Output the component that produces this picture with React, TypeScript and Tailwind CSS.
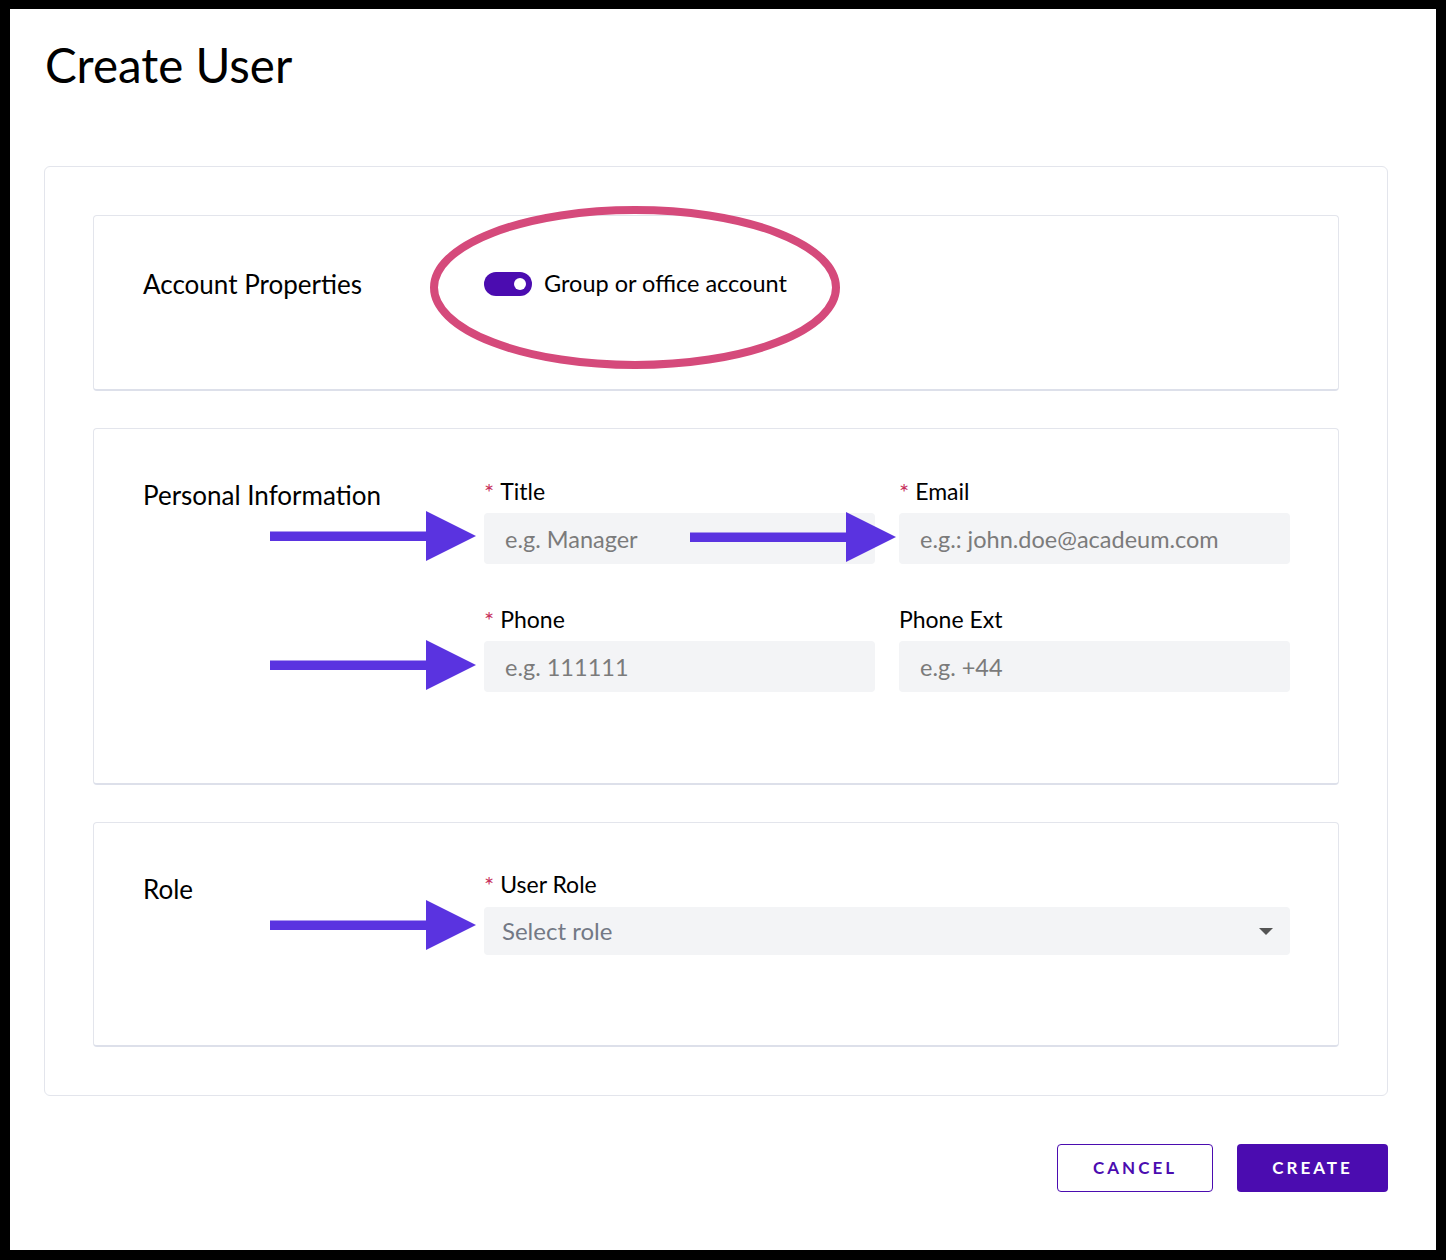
import React from "react";

const font = { fontFamily: '"Lato", "Noto Sans", sans-serif' };

function Arrow({ left, top }: { left: number; top: number }) {
  return (
    <svg
      className="absolute pointer-events-none"
      style={{ left, top }}
      width={206}
      height={50}
      viewBox="0 0 206 50"
    >
      <rect x={0} y={20.5} width={160} height={9.5} fill="#5a33e0" />
      <polygon points="156,0 206,25 156,50" fill="#5a33e0" />
    </svg>
  );
}

function FieldLabel({ text, required }: { text: string; required?: boolean }) {
  return (
    <div className="h-[28px] flex items-center text-[23px] leading-[28px] text-black">
      {required && <span className="text-[#c8325d] text-[24px] leading-none mr-[6px] mt-[2px]">*</span>}
      <span>{text}</span>
    </div>
  );
}

function TextField({ label, placeholder, required }: { label: string; placeholder: string; required?: boolean }) {
  return (
    <div className="flex flex-col">
      <FieldLabel text={label} required={required} />
      <input
        className="mt-[8px] h-[51px] w-full rounded-[4px] bg-[#f3f4f6] pl-[21px] text-[23.5px] text-black outline-none placeholder:text-[#7b7b7b]"
        placeholder={placeholder}
        style={font}
      />
    </div>
  );
}

export default function App() {
  return (
    <div className="relative w-full h-[1260px] bg-black pt-[9px] pl-[10px] pr-[10px] pb-[10px]" style={font}>
      <div className="h-full bg-white flex flex-col">
        <h1 className="pl-[35px] pt-[32px] text-[47.5px] leading-[47px] font-normal text-black">Create User</h1>

        <div className="mt-[78px] ml-[34px] w-[1344px] rounded-[6px] border border-[#e3e5ec] p-[48px] flex flex-col gap-[37px]">
          {/* Account Properties */}
          <section className="h-[176px] rounded-[4px] border border-[#e3e5ec] border-b-2 border-b-[#dde0ea] pl-[49px] pt-[47px]">
            <div className="flex items-center h-[42px]">
              <div className="w-[341px] text-[26px] text-black">Account Properties</div>
              <div className="flex items-center gap-[12px]">
                <div className="relative h-[24px] w-[48px] rounded-full bg-[#4b0cb0]">
                  <div className="absolute right-[6px] top-[6px] h-[12px] w-[12px] rounded-full bg-white" />
                </div>
                <span className="text-[23.5px] text-black">Group or office account</span>
              </div>
            </div>
          </section>

          {/* Personal Information */}
          <section className="h-[357px] rounded-[4px] border border-[#e3e5ec] border-b-2 border-b-[#dde0ea] pl-[49px] pt-[48px]">
            <div className="flex">
              <div className="w-[341px] pt-[1px] text-[26px] leading-[34px] text-black">Personal Information</div>
              <div className="grid grid-cols-[391px_391px] gap-x-[24px] gap-y-[41px]">
                <TextField label="Title" placeholder="e.g. Manager" required />
                <TextField label="Email" placeholder="e.g.: john.doe@acadeum.com" required />
                <TextField label="Phone" placeholder="e.g. 111111" required />
                <TextField label="Phone Ext" placeholder="e.g. +44" />
              </div>
            </div>
          </section>

          {/* Role */}
          <section className="h-[225px] rounded-[4px] border border-[#e3e5ec] border-b-2 border-b-[#dde0ea] pl-[49px] pt-[47px]">
            <div className="flex">
              <div className="w-[341px] pt-[2px] text-[26px] leading-[34px] text-black">Role</div>
              <div className="flex flex-col w-[806px]">
                <FieldLabel text="User Role" required />
                <div className="mt-[9px] h-[48px] w-full rounded-[4px] bg-[#f3f4f6] pl-[18px] pr-[17px] flex items-center justify-between">
                  <span className="text-[24px] text-[#737985]">Select role</span>
                  <svg width="14" height="7" viewBox="0 0 14 7">
                    <polygon points="0,0 14,0 7,7" fill="#545454" />
                  </svg>
                </div>
              </div>
            </div>
          </section>
        </div>

        <div className="mt-[48px] pr-[48px] flex justify-end gap-[24px]">
          <button className="h-[48px] w-[156px] rounded-[4px] border border-[#4b0cb0] bg-white text-[17px] font-bold tracking-[3px] text-[#4b0cb0]">
            CANCEL
          </button>
          <button className="h-[48px] w-[151px] rounded-[4px] bg-[#4b0cb0] text-[17px] font-bold tracking-[3px] text-white">
            CREATE
          </button>
        </div>
      </div>

      {/* Annotations */}
      <svg className="absolute pointer-events-none" style={{ left: 430, top: 206 }} width={410} height={163} viewBox="0 0 410 163">
        <ellipse cx={205} cy={81.5} rx={201} ry={77.5} fill="none" stroke="#d54a7b" strokeWidth={8} />
      </svg>
      <Arrow left={270} top={511} />
      <Arrow left={690} top={512} />
      <Arrow left={270} top={640} />
      <Arrow left={270} top={900} />
    </div>
  );
}
